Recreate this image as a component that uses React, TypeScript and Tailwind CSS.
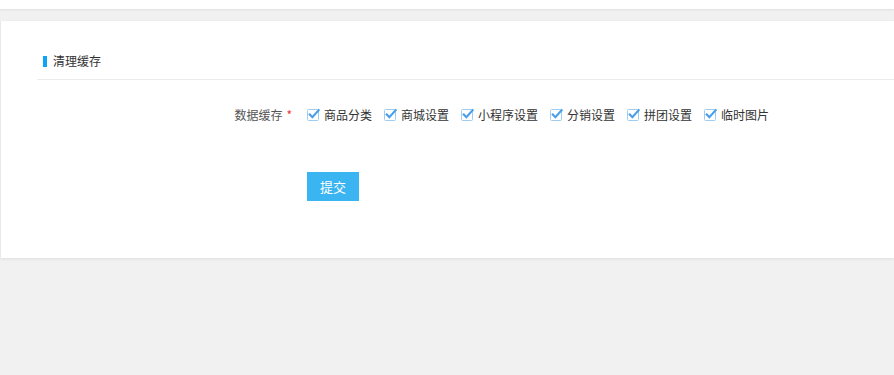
import React from 'react';

const ITEMS = ['商品分类', '商城设置', '小程序设置', '分销设置', '拼团设置', '临时图片'];

const CheckIcon: React.FC = () => (
  <svg width="14" height="14" viewBox="0 0 14 14" className="flex-shrink-0">
    <rect x="0.5" y="1.5" width="11" height="11" rx="1" fill="#fff" stroke="#9fcdf2" />
    <path d="M2.8 6.6 L5.4 9.2 L11.6 2.2" fill="none" stroke="#4a9fe8" strokeWidth="2.2" strokeLinecap="square" />
  </svg>
);

export default function App() {
  return (
    <div
      className="w-[894px] h-[375px] bg-[#f1f1f1] overflow-hidden"
      style={{ fontFamily: '"Noto Sans CJK SC", "Liberation Sans", sans-serif' }}
    >
      <div className="h-[9px] bg-white shadow-[0_1px_2px_rgba(0,0,0,0.08)]"></div>

      <div className="mt-[12px] h-[237px] bg-white border-l border-[#e8e8e8] shadow-[0_1px_3px_rgba(0,0,0,0.08)]">
        <div className="pl-[36px] pt-[32px]">
          <div className="flex items-center h-[16px] pl-[6px]">
            <span className="w-[4px] h-[11px] bg-[#0ea5f4]"></span>
            <span className="ml-[6px] text-[12px] leading-none text-[#333]">清理缓存</span>
          </div>
          <div className="mt-[10px] h-px bg-[#ececec]"></div>
        </div>

        <div className="flex items-center mt-[28px]">
          <div className="w-[291px] text-right text-[12px] text-[#555] leading-none">
            数据缓存<span className="text-[#e33] ml-[4px]">*</span>
          </div>
          <div className="flex items-center ml-[15px] gap-[12px]">
            {ITEMS.map((item) => (
              <label key={item} className="flex items-center gap-[3px] text-[12px] text-[#333] leading-none">
                <CheckIcon />
                <span>{item}</span>
              </label>
            ))}
          </div>
        </div>

        <div className="pl-[306px] mt-[50px]">
          <button className="w-[52px] h-[29px] bg-[#3bb4f2] text-white text-[13px] leading-none">
            提交
          </button>
        </div>
      </div>
    </div>
  );
}
